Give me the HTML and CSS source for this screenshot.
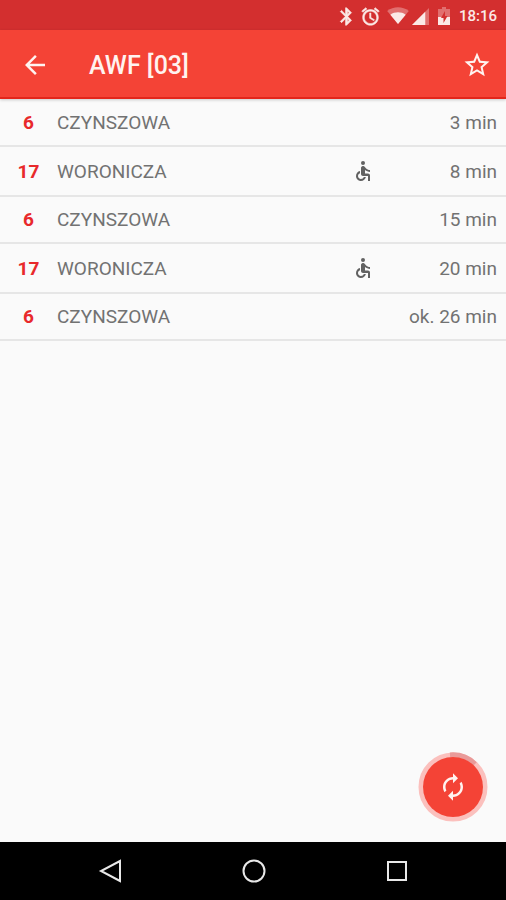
FILE: index.html
```html
<!DOCTYPE html>
<html lang="pl">
<head>
<meta charset="utf-8">
<meta name="viewport" content="width=device-width, initial-scale=1">
<title>AWF [03]</title>
<link rel="stylesheet" href="styles.css">
</head>
<body>
<div class="status">
  <svg class="status-icon status-bluetooth" viewBox="0 0 24 24" aria-hidden="true"><path d="M17.71 7.71L12 2h-1v7.59L6.41 5 5 6.41 10.59 12 5 17.59 6.41 19 11 14.41V22h1l5.71-5.71-4.3-4.29 4.3-4.29zM13 5.83l1.88 1.88L13 9.59V5.83zm1.88 10.46L13 18.17v-3.76l1.88 1.88z" stroke="currentColor" stroke-width="0.8"/></svg>
  <svg class="status-icon" viewBox="0 0 24 24" aria-hidden="true"><path stroke="currentColor" stroke-width="0.6" d="M22 5.72l-4.6-3.86-1.29 1.53 4.6 3.86L22 5.72zM7.88 3.39L6.6 1.86 2 5.71l1.29 1.53 4.59-3.85zM12.5 8H11v6l4.75 2.85.75-1.23-4-2.37V8zM12 4c-4.97 0-9 4.03-9 9s4.02 9 9 9c4.97 0 9-4.03 9-9s-4.03-9-9-9zm0 16c-3.87 0-7-3.13-7-7s3.13-7 7-7 7 3.13 7 7-3.13 7-7 7z"/></svg>
  <svg class="status-wifi" viewBox="0 0 24 20" aria-hidden="true"><path opacity=".35" d="M12 19L0 4.500C7 -1 17 -1 24 4.500z"/><path d="M12 19L3.500 8.500C8.500 5 15.500 5 20.500 8.500z"/></svg>
  <svg class="status-signal" viewBox="0 0 18 18" aria-hidden="true"><path opacity=".35" d="M0 18L18 0v18z"/><path d="M0 18L14 4v14z"/></svg>
  <svg class="status-battery" viewBox="0 0 12 18" aria-hidden="true"><path opacity=".35" d="M4 0h4v2h4v8H0V2h4z"/><path d="M0 10h12v8H0z"/><path class="bolt" d="M7 4L3 11h2.500v5L9.500 9H7z"/></svg>
  <time class="clock">18:16</time>
</div>
<header class="toolbar">
  <button class="icon-button" type="button" aria-label="Wstecz">
    <svg class="icon" viewBox="0 0 24 24"><path d="M20 11H7.830l5.590-5.590L12 4l-8 8 8 8 1.410-1.410L7.830 13H20v-2z"/></svg>
  </button>
  <h1 class="title">AWF [03]</h1>
  <button class="icon-button" type="button" aria-label="Ulubione">
    <svg class="icon" viewBox="0 0 24 24"><path d="M22 9.240l-7.190-.62L12 2 9.190 8.630 2 9.240l5.460 4.730L5.820 21 12 17.270 18.180 21l-1.630-7.030L22 9.240zM12 15.400l-3.760 2.270 1-4.280-3.320-2.880 4.380-.38L12 6.100l1.710 4.040 4.380.38-3.320 2.880 1 4.280L12 15.400z"/></svg>
  </button>
</header>
<main class="content">
  <svg class="defs" aria-hidden="true">
    <symbol id="accessible" viewBox="0 0 24 24"><circle cx="12" cy="4" r="2"/><path d="M19 13v-2c-1.540.02-3.090-.75-4.070-1.830l-1.290-1.430c-.17-.19-.38-.34-.61-.45-.01 0-.01-.01-.02-.01H13c-.35-.2-.75-.3-1.190-.26C10.760 7.110 10 8.040 10 9.090V15c0 1.100.9 2 2 2h5v5h2v-5.500c0-1.100-.9-2-2-2h-3v-3.450c1.290 1.070 3.250 1.940 5 1.950zm-6.170 5c-.41 1.160-1.520 2-2.830 2-1.660 0-3-1.340-3-3 0-1.310.84-2.410 2-2.830V12.100c-2.280.46-4 2.480-4 4.900 0 2.760 2.240 5 5 5 2.420 0 4.440-1.720 4.900-4h-2.070z"/></symbol>
  </svg>
  <table class="departures">
    <tr><th class="line" scope="row">6</th><td class="place">CZYNSZOWA</td><td class="access"></td><td class="time">3 min</td></tr>
    <tr><th class="line" scope="row">17</th><td class="place">WORONICZA</td><td class="access"><svg class="wheelchair"><use href="#accessible"/></svg></td><td class="time">8 min</td></tr>
    <tr><th class="line" scope="row">6</th><td class="place">CZYNSZOWA</td><td class="access"></td><td class="time">15 min</td></tr>
    <tr><th class="line" scope="row">17</th><td class="place">WORONICZA</td><td class="access"><svg class="wheelchair"><use href="#accessible"/></svg></td><td class="time">20 min</td></tr>
    <tr><th class="line" scope="row">6</th><td class="place">CZYNSZOWA</td><td class="access"></td><td class="time">ok. 26 min</td></tr>
  </table>
  <button class="fab" type="button" aria-label="Odśwież">
    <svg class="fab-art" viewBox="0 0 70 70">
      <circle class="ring" cx="35" cy="35" r="32"/>
      <path class="progress" d="M32 3A32 32 0 0 1 57 12"/>
      <circle class="disc" cx="35" cy="35" r="30"/>
      <path class="refresh" transform="translate(20 20) scale(1.250)" d="M12 6v3l4-4-4-4v3c-4.420 0-8 3.580-8 8 0 1.570.46 3.030 1.240 4.260L6.700 14.800c-.45-.83-.7-1.790-.7-2.800 0-3.310 2.690-6 6-6zm6.760 1.740L17.300 9.200c.44.84.7 1.790.7 2.800 0 3.310-2.690 6-6 6v-3l-4 4 4 4v-3c4.420 0 8-3.580 8-8 0-1.570-.46-3.030-1.240-4.260z"/>
    </svg>
  </button>
</main>
<nav class="navbar" aria-label="System">
  <button class="nav-button" type="button" aria-label="Back"><svg class="nav-icon" viewBox="0 0 26 26"><path d="M22 3v20L3 13z"/></svg></button>
  <button class="nav-button" type="button" aria-label="Home"><svg class="nav-icon" viewBox="0 0 26 26"><circle cx="13" cy="13" r="10.500"/></svg></button>
  <button class="nav-button" type="button" aria-label="Recent"><svg class="nav-icon" viewBox="0 0 26 26"><path d="M4 4h18v18H4z"/></svg></button>
</nav>
</body>
</html>
```
FILE: styles.css
```css
* {
  box-sizing: border-box;
}

body {
  margin: 0;
  min-height: 100vh;
  display: flex;
  flex-direction: column;
  background: #fafafa;
  font-family: Roboto, "Liberation Sans", sans-serif;
}

button {
  display: flex;
  align-items: center;
  justify-content: center;
  padding: 0;
  border: 0;
  background: none;
  color: inherit;
}

svg {
  display: block;
  flex: none;
  fill: currentColor;
}

.status {
  height: 30px;
  padding: 2px 9px 0 0;
  display: flex;
  align-items: center;
  justify-content: flex-end;
  background: #d32f2f;
  color: #fbe9e7;
}

.status-icon {
  width: 21px;
  height: 21px;
  margin-right: 4px;
}

.status-bluetooth {
  margin-right: 3px;
}

.status-wifi {
  width: 22px;
  height: 18px;
  margin: 0 3px 0 2px;
}

.status-signal {
  width: 17px;
  height: 17px;
}

.status-battery {
  width: 12px;
  height: 18px;
  margin: 0 9px;
}

.bolt {
  fill: #d32f2f;
}

.clock {
  font-size: 15px;
  line-height: 20px;
  font-weight: 500;
}

.toolbar {
  height: 69px;
  padding: 2px 14px 0 20px;
  display: flex;
  align-items: center;
  background: #f44336;
  border-bottom: 2px solid #e3261b;
  box-shadow: 0 1px 3px rgba(0, 0, 0, 0.2);
  color: #fff3f0;
  z-index: 1;
}

.icon-button {
  width: 30px;
  height: 30px;
}

.icon {
  width: 30px;
  height: 30px;
}

.title {
  flex: 1;
  margin: 0 0 0 39px;
  padding-top: 2px;
  font-size: 25px;
  line-height: 28px;
  font-weight: 500;
}

.content {
  position: relative;
  flex: 1;
  padding-top: 1px;
}

.defs {
  position: absolute;
  width: 0;
  height: 0;
}

.departures {
  width: 100%;
  border-collapse: separate;
  border-spacing: 0;
  font-size: 19px;
  line-height: 21px;
  color: #727272;
}

.departures th,
.departures td {
  padding: 12px 0;
  border-bottom: 2px solid #e6e6e6;
  white-space: nowrap;
}

.departures .line {
  width: 57px;
  font-weight: 700;
  color: #e8292b;
}

.departures .access {
  width: 24px;
}

.departures .time {
  width: 131px;
  padding-right: 9px;
  text-align: right;
}

.wheelchair {
  width: 24px;
  height: 24px;
  color: #616161;
}

.fab {
  position: absolute;
  right: 18px;
  bottom: 20px;
  border-radius: 50%;
}

.fab-art {
  width: 70px;
  height: 70px;
}

.ring {
  fill: none;
  stroke: #fbc0bd;
  stroke-width: 5;
}

.progress {
  fill: none;
  stroke: #e99a99;
  stroke-width: 5;
}

.disc {
  fill: #f44336;
}

.refresh {
  fill: #fff3f0;
}

.navbar {
  height: 58px;
  padding: 0 38px 0 40px;
  display: flex;
  background: #000;
  color: #e8e8e8;
}

.nav-button {
  flex: 1;
}

.nav-icon {
  width: 26px;
  height: 26px;
  fill: none;
  stroke: currentColor;
  stroke-width: 2;
}
```
